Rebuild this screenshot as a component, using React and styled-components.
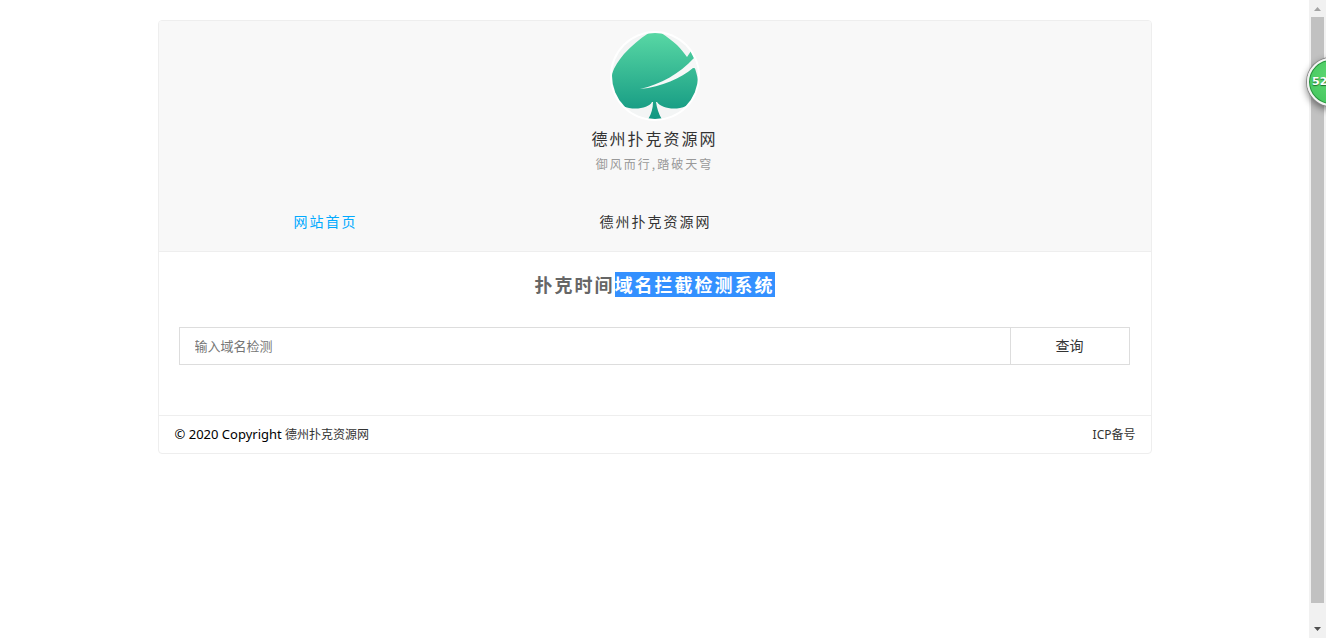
import { useState } from "react";
import styled, { createGlobalStyle } from "styled-components";

const GlobalStyle = createGlobalStyle`
  * {
    box-sizing: border-box;
  }

  body {
    margin: 0;
    background: #fff;
    color: #000;
    font-family: "Noto Sans", "Noto Sans CJK SC", sans-serif;
    font-size: 12px;
  }

  a {
    color: #333;
    text-decoration: none;
  }
`;

const Page = styled.div`
  display: flex;
  height: 100vh;
  overflow: hidden;
`;

const Content = styled.main`
  flex: 1;
  padding: 20px 0;
`;

const Card = styled.div`
  max-width: 994px;
  margin: 0 auto;
  border: 1px solid #eee;
  border-radius: 4px;
  overflow: hidden;
`;

const Header = styled.header`
  padding-top: 10px;
  background: #f8f8f8;
  border-bottom: 1px solid #eee;
  font-family: "Noto Sans CJK SC", sans-serif;
  letter-spacing: 2px;
  text-align: center;
`;

const Logo = styled.svg`
  display: block;
  width: 90px;
  height: 90px;
  margin: 0 auto;
`;

const SiteName = styled.h1`
  margin: 5px 0 0;
  color: #333;
  font-size: 16px;
  font-weight: 400;
  line-height: 24px;
`;

const Slogan = styled.p`
  margin: 4px 0 0;
  color: #999;
  font-size: 12px;
  font-weight: 400;
  line-height: 20px;
`;

const Nav = styled.nav`
  display: grid;
  grid-template-columns: repeat(3, 1fr);
  margin-top: 17px;
  padding-left: 2px;
`;

const NavLink = styled.a`
  color: ${({ $active }) => ($active ? "#01aaff" : "#333")};
  font-size: 14px;
  line-height: 60px;
`;

const Title = styled.h2`
  margin: 20px 0 30px;
  color: #666;
  font-family: "Noto Sans CJK SC", sans-serif;
  font-size: 18px;
  font-weight: 700;
  letter-spacing: 2px;
  line-height: 25px;
  text-align: center;
`;

const Highlight = styled.mark`
  display: inline-block;
  background: #3390ff;
  color: #fff;
`;

const SearchForm = styled.form`
  display: flex;
  margin: 0 21px 50px 20px;
`;

const SearchInput = styled.input`
  flex: 1;
  min-width: 0;
  height: 38px;
  padding: 0 15px 2px;
  border: 1px solid #ddd;
  border-right: none;
  border-radius: 0;
  outline: none;
  font-family: "Noto Sans CJK SC", sans-serif;
  font-size: 13px;

  &::placeholder {
    color: #757575;
  }
`;

const SearchButton = styled.button`
  width: 120px;
  height: 38px;
  padding: 0 0 2px;
  border: 1px solid #ddd;
  background: #fff;
  color: #333;
  font-family: "Noto Sans CJK SC", sans-serif;
  font-size: 14px;
  cursor: pointer;
`;

const Footer = styled.footer`
  display: flex;
  justify-content: space-between;
  padding: 0 15px 0 16px;
  border-top: 1px solid #eee;
  line-height: 37px;
`;

const Copyright = styled.span`
  font-size: 13px;

  a {
    font-size: 12px;
  }
`;

const ScrollTrack = styled.aside`
  position: relative;
  display: flex;
  flex-direction: column;
  justify-content: space-between;
  width: 17px;
  padding-right: 2px;
  background: #f1f1f1;
`;

const ScrollArrow = styled.svg`
  display: block;
  width: 17px;
  height: 17px;
`;

const ScrollThumb = styled.div`
  flex: 1;
  margin: 0 0 18px 2px;
  background: #c1c1c1;
`;

const Bubble = styled.button`
  position: absolute;
  top: 58px;
  left: -2px;
  width: 48px;
  height: 48px;
  padding: 0 0 2px 3px;
  border: 2px solid #f4f4f4;
  border-radius: 50%;
  background: radial-gradient(circle at 50% 40%, #5fd873, #3fc35a);
  box-shadow: 0 0 0 1px #888, inset 0 0 0 1px #2b8f3f, 0 3px 7px 1px rgba(0, 0, 0, 0.45);
  color: #fff;
  font-family: "DejaVu Sans", sans-serif;
  font-size: 11px;
  font-weight: 700;
  text-align: left;
  text-shadow: 0 1px 1px #1d6b2c;
`;

function SpadeLogo() {
  return (
    <Logo viewBox="0 0 90 90" aria-hidden="true">
      <defs>
        <linearGradient id="spade" x1="0" y1="0" x2="0" y2="90" gradientUnits="userSpaceOnUse">
          <stop offset="0" stopColor="#5ad9a5" />
          <stop offset="1" stopColor="#0f9580" />
        </linearGradient>
        <clipPath id="round">
          <circle cx="45" cy="45" r="43" />
        </clipPath>
      </defs>
      <circle cx="45" cy="45" r="45" fill="#fff" />
      <g clipPath="url(#round)">
        <rect width="90" height="90" fill="#f3f5f5" />
        <path
          d="M42 0C32 6 22 14 14 23C8 30 3 38 1 46C-1 58 3 70 13 75C24 80 39 77 42 71H43C43 78 41 84 37 90H53C49 84 47 78 46 71H47C51 77 65 80 76 75C87 70 91 58 88 49C87 44 86 40 84 35V27L81 20L77 26C74 22 71 18 67 14C61 9 55 4 48 0Z"
          fill="url(#spade)"
        />
        <path d="M30 58C51 53 69 43 84 27L92 24V38L83 37C71 47 52 56 30 58Z" fill="#f7f8f8" />
      </g>
    </Logo>
  );
}

export default function App() {
  const [domain, setDomain] = useState("");

  function handleSubmit(event) {
    event.preventDefault();
  }

  return (
    <Page>
      <GlobalStyle />
      <Content>
        <Card>
          <Header>
            <SpadeLogo />
            <SiteName>德州扑克资源网</SiteName>
            <Slogan>御风而行,踏破天穹</Slogan>
            <Nav>
              <NavLink href="#home" $active>
                网站首页
              </NavLink>
              <NavLink href="#poker">德州扑克资源网</NavLink>
            </Nav>
          </Header>
          <Title>
            扑克时间<Highlight>域名拦截检测系统</Highlight>
          </Title>
          <SearchForm onSubmit={handleSubmit}>
            <SearchInput
              type="text"
              aria-label="输入域名检测"
              placeholder="输入域名检测"
              value={domain}
              onChange={(event) => setDomain(event.target.value)}
            />
            <SearchButton type="submit">查询</SearchButton>
          </SearchForm>
          <Footer>
            <Copyright>
              © 2020 Copyright <a href="#poker">德州扑克资源网</a>
            </Copyright>
            <a href="#icp">ICP备号</a>
          </Footer>
        </Card>
      </Content>
      <ScrollTrack>
        <ScrollArrow viewBox="0 0 17 17" aria-hidden="true">
          <path d="M5 11L8.500 7L12 11Z" fill="#a3a3a3" />
        </ScrollArrow>
        <ScrollThumb />
        <ScrollArrow viewBox="0 0 17 17" aria-hidden="true">
          <path d="M5 6L8.500 10L12 6Z" fill="#505050" />
        </ScrollArrow>
        <Bubble type="button">52</Bubble>
      </ScrollTrack>
    </Page>
  );
}
